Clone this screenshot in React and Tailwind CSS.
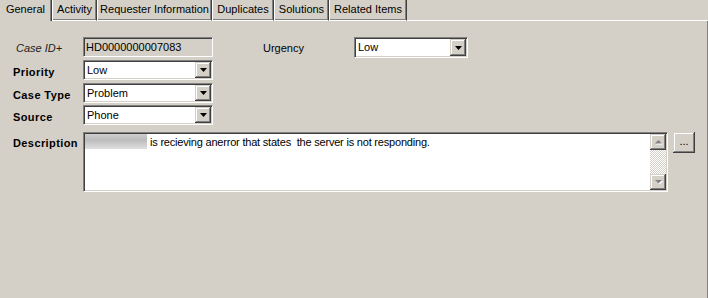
import React from 'react';

const tabs = [
  { label: 'General', w: 'w-[52px]', active: true },
  { label: 'Activity', w: 'w-[45px]' },
  { label: 'Requester Information', w: 'w-[115px]' },
  { label: 'Duplicates', w: 'w-[62px]' },
  { label: 'Solutions', w: 'w-[55px]' },
  { label: 'Related Items', w: 'w-[78px]' },
];

const sunken =
  'border border-t-[#808080] border-l-[#808080] border-b-white border-r-white shadow-[inset_1px_1px_0_#404040,inset_-1px_-1px_0_#d4d0c8]';
const raised =
  'bg-[#d4d0c8] shadow-[inset_-1px_-1px_0_#404040,inset_1px_1px_0_#d4d0c8,inset_-2px_-2px_0_#808080,inset_2px_2px_0_#ffffff]';

function Arrow({ up = false, disabled = false }) {
  if (disabled) {
    return (
      <svg width="9" height="6" viewBox="0 0 9 6">
        {up ? (
          <>
            <polygon points="4.5,1 8,4.5 1,4.5" fill="#ffffff" transform="translate(1,1)" />
            <polygon points="4.5,1 8,4.5 1,4.5" fill="#808080" />
          </>
        ) : (
          <>
            <polygon points="1,1 8,1 4.5,4.5" fill="#ffffff" transform="translate(1,1)" />
            <polygon points="1,1 8,1 4.5,4.5" fill="#808080" />
          </>
        )}
      </svg>
    );
  }
  return (
    <svg width="7" height="4" viewBox="0 0 7 4">
      <polygon points="0,0 7,0 3.5,4" fill="#000000" />
    </svg>
  );
}

function Select({ value, w, h = 'h-[20px]' }) {
  return (
    <div className={`${w} ${h} flex items-stretch bg-white ${sunken}`}>
      <div className="flex-1 pl-[3px] pt-[1px] text-[11px] leading-[16px] text-black">{value}</div>
      <div className={`w-[16px] m-[1px] flex items-center justify-center ${raised}`}>
        <Arrow />
      </div>
    </div>
  );
}

function Label({ children }) {
  return (
    <div className="w-[83px] pl-[13px] pt-[6px] text-[11px] leading-[13px] font-bold tracking-[0.4px] text-black">
      {children}
    </div>
  );
}

export default function App() {
  return (
    <div className="w-[708px] h-[298px] bg-[#d4d0c8] font-['Liberation_Sans',Arial,sans-serif] text-[11px] text-black overflow-hidden flex flex-col">
      <div className="flex h-[21px]">
        {tabs.map((t) =>
          t.active ? (
            <div
              key={t.label}
              className={`${t.w} h-[21px] flex items-center justify-center pb-[2px] border-r border-r-[#404040] shadow-[inset_-1px_0_0_#808080]`}
            >
              {t.label}
            </div>
          ) : (
            <div
              key={t.label}
              className={`${t.w} h-[21px] flex items-center justify-center pb-[1px] border-l border-l-white border-r border-r-[#404040] border-b border-b-white shadow-[inset_-1px_-1px_0_#808080]`}
            >
              {t.label}
            </div>
          )
        )}
        <div className="flex-1 border-b border-b-white" />
      </div>

      <div className="flex-1 border-r border-r-[#808080] pt-[16px] flex flex-col">
        <div className="flex items-start h-[20px]">
          <div className="w-[83px] pl-[16px] pt-[3px] italic text-[11px] text-[#202020]">Case ID+</div>
          <div className={`w-[130px] h-[20px] bg-[#d4d0c8] pl-[2px] pt-[1px] leading-[16px] ${sunken}`}>
            HD0000000007083
          </div>
          <div className="w-[91px] ml-[50px] pt-[3px]">Urgency</div>
          <Select value="Low" w="w-[114px]" h="h-[21px]" />
        </div>

        <div className="flex items-start mt-[3px]">
          <Label>Priority</Label>
          <Select value="Low" w="w-[130px]" />
        </div>
        <div className="flex items-start mt-[3px]">
          <Label>Case Type</Label>
          <Select value="Problem" w="w-[130px]" />
        </div>
        <div className="flex items-start mt-[2px]">
          <Label>Source</Label>
          <Select value="Phone" w="w-[130px]" />
        </div>

        <div className="flex items-start mt-[7px]">
          <div className="w-[83px] pl-[13px] pt-[3px] text-[11px] font-bold tracking-[0.4px]">Description</div>
          <div className={`w-[585px] h-[60px] bg-white flex ${sunken}`}>
            <div className="flex-1 flex items-start pl-[1px] pt-[1px]">
              <div className="w-[62px] h-[15px] bg-[linear-gradient(180deg,#c8c8c8_0%,#b4b4b4_40%,#dcdcdc_100%)] opacity-90" />
              <div className="pl-[3px] pt-[1px] leading-[14px] whitespace-pre tracking-[-0.2px]">
                is recieving anerror that states  the server is not responding.
              </div>
            </div>
            <div className="w-[16px] m-[1px] ml-0 flex flex-col bg-[repeating-conic-gradient(#d4d0c8_0%_25%,#ffffff_0%_50%)] bg-size-[2px_2px]">
              <div className={`h-[16px] flex items-center justify-center ${raised}`}>
                <Arrow up disabled />
              </div>
              <div className="flex-1" />
              <div className={`h-[16px] flex items-center justify-center ${raised}`}>
                <Arrow disabled />
              </div>
            </div>
          </div>
          <button
            className={`ml-[5px] w-[22px] h-[21px] flex items-center justify-center text-[11px] leading-none pb-[2px] ${raised}`}
          >
            ...
          </button>
        </div>
      </div>
    </div>
  );
}
